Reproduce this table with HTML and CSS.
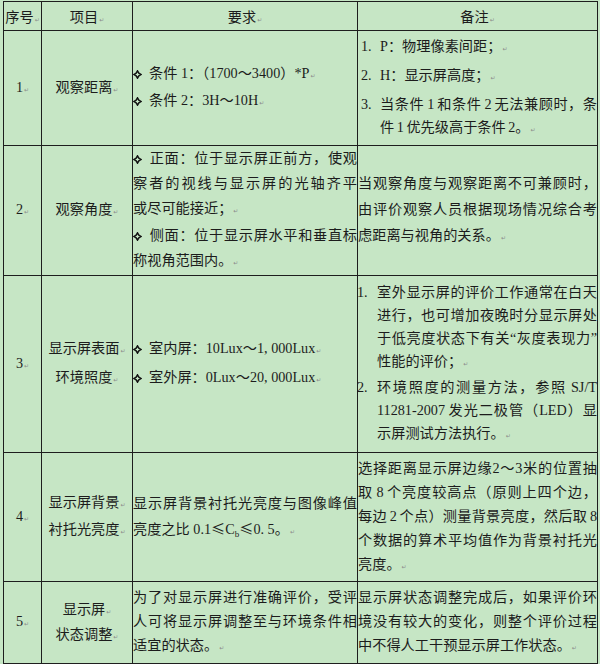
FILE: index.html
```html
<!DOCTYPE html>
<html lang="zh-CN">
<head>
<meta charset="utf-8">
<title>显示屏评价条件</title>
<link rel="stylesheet" href="styles.css">
</head>
<body>
<table class="spec">
  <thead>
    <tr class="hd">
      <th class="c-no">序号<span class="pm">↵</span></th>
      <th class="c-item">项目<span class="pm">↵</span></th>
      <th class="c-req">要求<span class="pm">↵</span></th>
      <th class="c-note">备注<span class="pm">↵</span></th>
    </tr>
  </thead>
  <tbody>
    <tr class="r1">
      <td class="no pt7">1<span class="pm">↵</span></td>
      <td class="item pt7">观察距离<span class="pm">↵</span></td>
      <td class="req pt4">
        <div class="bi"><svg class="dia" viewBox="0 0 10 10"><path d="M5 0.9 L6.5 3.5 L9.1 5 L6.5 6.5 L5 9.1 L3.5 6.5 L0.9 5 L3.5 3.5 Z"/></svg>条件 1：（1700～3400）*P<span class="pm">↵</span></div>
        <div class="bi"><svg class="dia" viewBox="0 0 10 10"><path d="M5 0.9 L6.5 3.5 L9.1 5 L6.5 6.5 L5 9.1 L3.5 6.5 L0.9 5 L3.5 3.5 Z"/></svg>条件 2：3H～10H<span class="pm">↵</span></div>
      </td>
      <td class="note pt6 lh23">
        <div class="oi gap4 in3"><span class="num">1.</span><div class="body"><span class="ln">P：物理像素间距；<span class="pm">↵</span></span></div></div>
        <div class="oi gap4 in3"><span class="num">2.</span><div class="body"><span class="ln">H：显示屏高度；<span class="pm">↵</span></span></div></div>
        <div class="oi in3"><span class="num">3.</span><div class="body"><span class="ln j">当条件 1 和条件 2 无法兼顾时，条</span><span class="ln">件 1 优先级高于条件 2。<span class="pm">↵</span></span></div></div>
      </td>
    </tr>
    <tr class="r2">
      <td class="no pt9">2<span class="pm">↵</span></td>
      <td class="item pt9">观察角度<span class="pm">↵</span></td>
      <td class="req">
        <div class="bi"><span class="ln j"><svg class="dia" viewBox="0 0 10 10"><path d="M5 0.9 L6.5 3.5 L9.1 5 L6.5 6.5 L5 9.1 L3.5 6.5 L0.9 5 L3.5 3.5 Z"/></svg>正面：位于显示屏正前方，使观</span><span class="ln j">察者的视线与显示屏的光轴齐平</span><span class="ln">或尽可能接近；<span class="pm">↵</span></span></div>
        <div class="bi"><span class="ln j"><svg class="dia" viewBox="0 0 10 10"><path d="M5 0.9 L6.5 3.5 L9.1 5 L6.5 6.5 L5 9.1 L3.5 6.5 L0.9 5 L3.5 3.5 Z"/></svg>侧面：位于显示屏水平和垂直标</span><span class="ln">称视角范围内。<span class="pm">↵</span></span></div>
      </td>
      <td class="note pt2 lh26">
        <span class="ln j">当观察角度与观察距离不可兼顾时，</span><span class="ln j">由评价观察人员根据现场情况综合考</span><span class="ln">虑距离与视角的关系。<span class="pm">↵</span></span>
      </td>
    </tr>
    <tr class="r3">
      <td class="no pt5">3<span class="pm">↵</span></td>
      <td class="item pt5 lh26">显示屏表面<span class="pm">↵</span><br>环境照度<span class="pm">↵</span></td>
      <td class="req pt5 lh26">
        <div class="bi"><svg class="dia" viewBox="0 0 10 10"><path d="M5 0.9 L6.5 3.5 L9.1 5 L6.5 6.5 L5 9.1 L3.5 6.5 L0.9 5 L3.5 3.5 Z"/></svg>室内屏：10Lux～1, 000Lux<span class="pm">↵</span></div>
        <div class="bi"><svg class="dia" viewBox="0 0 10 10"><path d="M5 0.9 L6.5 3.5 L9.1 5 L6.5 6.5 L5 9.1 L3.5 6.5 L0.9 5 L3.5 3.5 Z"/></svg>室外屏：0Lux～20, 000Lux<span class="pm">↵</span></div>
      </td>
      <td class="note pb4 lh23">
        <div class="oi gap1 out1"><span class="num">1.</span><div class="body"><span class="ln j">室外显示屏的评价工作通常在白天</span><span class="ln j">进行，也可增加夜晚时分显示屏处</span><span class="ln j">于低亮度状态下有关“灰度表现力”</span><span class="ln">性能的评价；<span class="pm">↵</span></span></div></div>
        <div class="oi out1"><span class="num">2.</span><div class="body"><span class="ln j">环境照度的测量方法，参照 SJ/T</span><span class="ln j">11281-2007 发光二极管（LED）显</span><span class="ln">示屏测试方法执行。<span class="pm">↵</span></span></div></div>
      </td>
    </tr>
    <tr class="r4">
      <td class="no pt9">4<span class="pm">↵</span></td>
      <td class="item pt4">显示屏背景<span class="pm">↵</span><br>衬托光亮度<span class="pm">↵</span></td>
      <td class="req pt4">
        <span class="ln j">显示屏背景衬托光亮度与图像峰值</span><span class="ln">亮度之比 0.1<span class="cjk">≤</span>C<span class="sub">b</span><span class="cjk">≤</span>0. 5。<span class="pm">↵</span></span>
      </td>
      <td class="note pt5 lh24">
        <span class="ln j">选择距离显示屏边缘2～3米的位置抽</span><span class="ln j">取 8 个亮度较高点（原则上四个边，</span><span class="ln j">每边 2 个点）测量背景亮度，然后取 8</span><span class="ln j">个数据的算术平均值作为背景衬托光</span><span class="ln">亮度。<span class="pm">↵</span></span>
      </td>
    </tr>
    <tr class="r5">
      <td class="no pt8">5<span class="pm">↵</span></td>
      <td class="item pt9 lh23">显示屏<span class="pm">↵</span><br>状态调整<span class="pm">↵</span></td>
      <td class="req pt7 lh24">
        <span class="ln j">为了对显示屏进行准确评价，受评</span><span class="ln j">人可将显示屏调整至与环境条件相</span><span class="ln">适宜的状态。<span class="pm">↵</span></span>
      </td>
      <td class="note pt6 lh24">
        <span class="ln j">显示屏状态调整完成后，如果评价环</span><span class="ln j">境没有较大的变化，则整个评价过程</span><span class="ln">中不得人工干预显示屏工作状态。<span class="pm">↵</span></span>
      </td>
    </tr>
  </tbody>
</table>
</body>
</html>
```

FILE: styles.css
```css
* { box-sizing: border-box; }

html, body {
  margin: 0;
  padding: 0;
  background: #c6e6c5;
}

body {
  font-family: "Liberation Serif", "Noto Sans CJK SC", serif;
  font-size: 14.2px;
  color: #1c1c1c;
}

.spec {
  margin: 1px 0 0 3px;
  width: 595px;
  table-layout: fixed;
  border-collapse: separate;
  border-spacing: 0;
  border-top: 1px solid #1e1e1e;
  border-left: 1px solid #1e1e1e;
}

.spec th,
.spec td {
  border-right: 1px solid #1e1e1e;
  border-bottom: 1px solid #1e1e1e;
  padding: 0;
  vertical-align: middle;
  font-weight: normal;
  line-height: 25px;
}

.c-no { width: 38px; }
.c-item { width: 91px; }
.c-req { width: 225px; }
.c-note { width: 240px; }

.hd th {
  height: 27px;
  line-height: 20px;
  padding-top: 5px;
  text-align: center;
}

.r1 { height: 115px; }
.r2 { height: 129px; }
.r3 { height: 177px; }
.r4 { height: 129px; }
.r5 { height: 82px; }

.no, .item { text-align: center; }
.req { padding-left: 2px; text-align: left; }
.note { padding-left: 2px; text-align: left; word-spacing: -1px; }

.pt2 { padding-top: 2px; }
.pt4 { padding-top: 4px; }
.pt5 { padding-top: 5px; }
.pt6 { padding-top: 6px; }
.pt7 { padding-top: 7px; }
.pt8 { padding-top: 8px; }
.pt9 { padding-top: 9px; }
.pb4 { padding-bottom: 4px; }

.spec .lh23 { line-height: 23px; }
.spec .lh24 { line-height: 24px; }
.spec .lh26 { line-height: 26px; }

.ln { display: block; }
.ln.j { text-align: justify; text-align-last: justify; }

.bi { display: block; }

.dia {
  width: 9px;
  height: 9px;
  margin-right: 7px;
  vertical-align: -1px;
}
.dia path {
  fill: none;
  stroke: #111;
  stroke-width: 1.6;
  stroke-linejoin: miter;
}

.oi { display: flex; }
.oi .num { flex: none; }
.oi .body { flex: 1; min-width: 0; }
.in3 { margin-left: 3px; }
.in3 .num { width: 19px; }
.out1 { margin-left: -1px; }
.out1 .num { width: 20px; }
.gap4 { margin-bottom: 4px; }
.gap1 { margin-bottom: 1px; }

.cjk { font-family: "Noto Sans CJK SC", sans-serif; }

.sub {
  font-size: 9px;
  vertical-align: -3px;
  line-height: 0;
}

.pm {
  font-family: "DejaVu Sans", sans-serif;
  font-size: 6px;
  color: #8c8c8c;
  margin-left: 1px;
  word-spacing: 0;
}
```
